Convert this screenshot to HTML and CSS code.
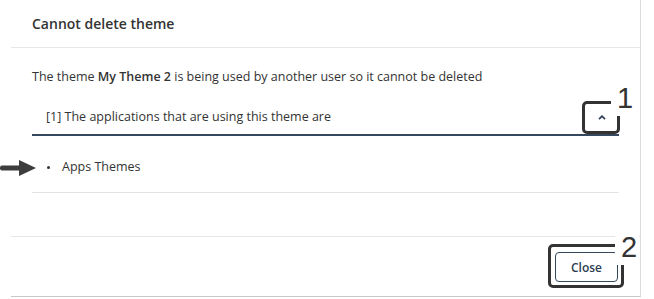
FILE: index.html
```html
<!DOCTYPE html>
<html>
<head>
<meta charset="utf-8">
<link rel="stylesheet" href="styles.css">
</head>
<body>
<div class="page">
  <div class="dialog">
    <div class="dlg-header"><h2 class="title">Cannot delete theme</h2></div>
    <div class="dlg-body">
      <p class="msg">The theme <b>My Theme 2</b> is being used by another user so it cannot be deleted</p>
      <div class="collapse">
        <div class="collapse-head">
          <span class="collapse-label">[1] The applications that are using this theme are</span>
          <button class="chev" type="button">
            <svg width="8" height="5" viewBox="0 0 8 5"><path d="M1 4.2 L4 1.2 L7 4.2" fill="none" stroke="#2c3e50" stroke-width="1.7"/></svg>
          </button>
        </div>
        <ul class="apps"><li><span class="dot"></span>Apps Themes</li></ul>
      </div>
    </div>
    <div class="dlg-footer"><button class="close" type="button">Close</button></div>
  </div>

  <div class="mark mark-1"></div>
  <span class="num num-1">1</span>
  <div class="mark mark-2"></div>
  <span class="num num-2">2</span>
  <svg class="arrow" width="38" height="18" viewBox="0 0 38 18"><rect x="0" y="6.5" width="22" height="5" rx="2" fill="#3d3d3d"/><path d="M19 1 L36 9 L19 17 Z" fill="#3d3d3d"/></svg>
</div>
</body>
</html>
```
FILE: styles.css
```css
html, body { margin: 0; padding: 0; background: #fff; }
body { font-family: "Open Sans", "Noto Sans", sans-serif; color: #333; }
.page { position: relative; width: 654px; height: 299px; }
.dialog {
  margin-left: 11px;
  width: 629px;
  height: 296px;
  border-right: 1px solid #dcdcdc;
  border-bottom: 1px solid #c8c8c8;
  display: flex;
  flex-direction: column;
}
.dlg-header {
  height: 47px;
  border-bottom: 1px solid #e6e6e6;
  padding-left: 21px;
  display: flex;
  align-items: center;
}
.title { margin: 0; font-size: 14px; font-weight: 600; color: #333; line-height: 20px; }
.dlg-body {
  padding: 20px 21px 0 21px;
  height: 168px;
  border-bottom: 1px solid #e6e6e6;
}
.msg { margin: 0; font-size: 12.5px; line-height: 18px; color: #333; }
.msg b { font-weight: 600; }
.collapse { margin-top: 14px; }
.collapse-head {
  height: 34px;
  border-bottom: 2px solid #34495e;
  display: flex;
  align-items: center;
  justify-content: space-between;
  padding-left: 14px;
}
.collapse-label { font-size: 12.5px; color: #333; line-height: 18px; }
.chev {
  width: 30px; height: 26px; margin-right: 2px;
  border: 0; background: transparent; padding: 0;
  display: flex; align-items: center; justify-content: center;
}
.apps {
  margin: 0;
  list-style: none;
  padding: 22px 0 16px 15px;
  border-bottom: 1px solid #e2e2e2;
  font-size: 12.5px; line-height: 18px; color: #333;
}
.apps li { display: flex; align-items: center; }
.dot { width: 3px; height: 3px; border-radius: 50%; background: #333; margin-right: 12px; }
.dlg-footer {
  flex: 1;
  display: flex;
  justify-content: flex-end;
  align-items: flex-start;
  padding: 15px 22px 0 0;
}
.close {
  height: 30px;
  padding: 0 15px;
  border: 1px solid #34495e;
  border-radius: 4px;
  background: #fff;
  font-family: "Open Sans", "Noto Sans", sans-serif;
  font-size: 12px; font-weight: 600; color: #2c3e50;
}
.mark { position: absolute; border: 3px solid #333; border-radius: 5px; box-sizing: border-box; }
.mark-1 { left: 582px; top: 101px; width: 38px; height: 33px; }
.mark-2 { left: 548px; top: 244px; width: 76px; height: 44px; }
.num {
  position: absolute; background: #fff;
  font-family: "Liberation Sans", Arial, sans-serif; font-size: 29px; line-height: 28px; color: #333;
  padding: 0 2px 4px 6px;
}
.num-1 { left: 611px; top: 84px; }
.num-2 { left: 615px; top: 233px; }
.arrow { position: absolute; left: 0; top: 159px; }
```
